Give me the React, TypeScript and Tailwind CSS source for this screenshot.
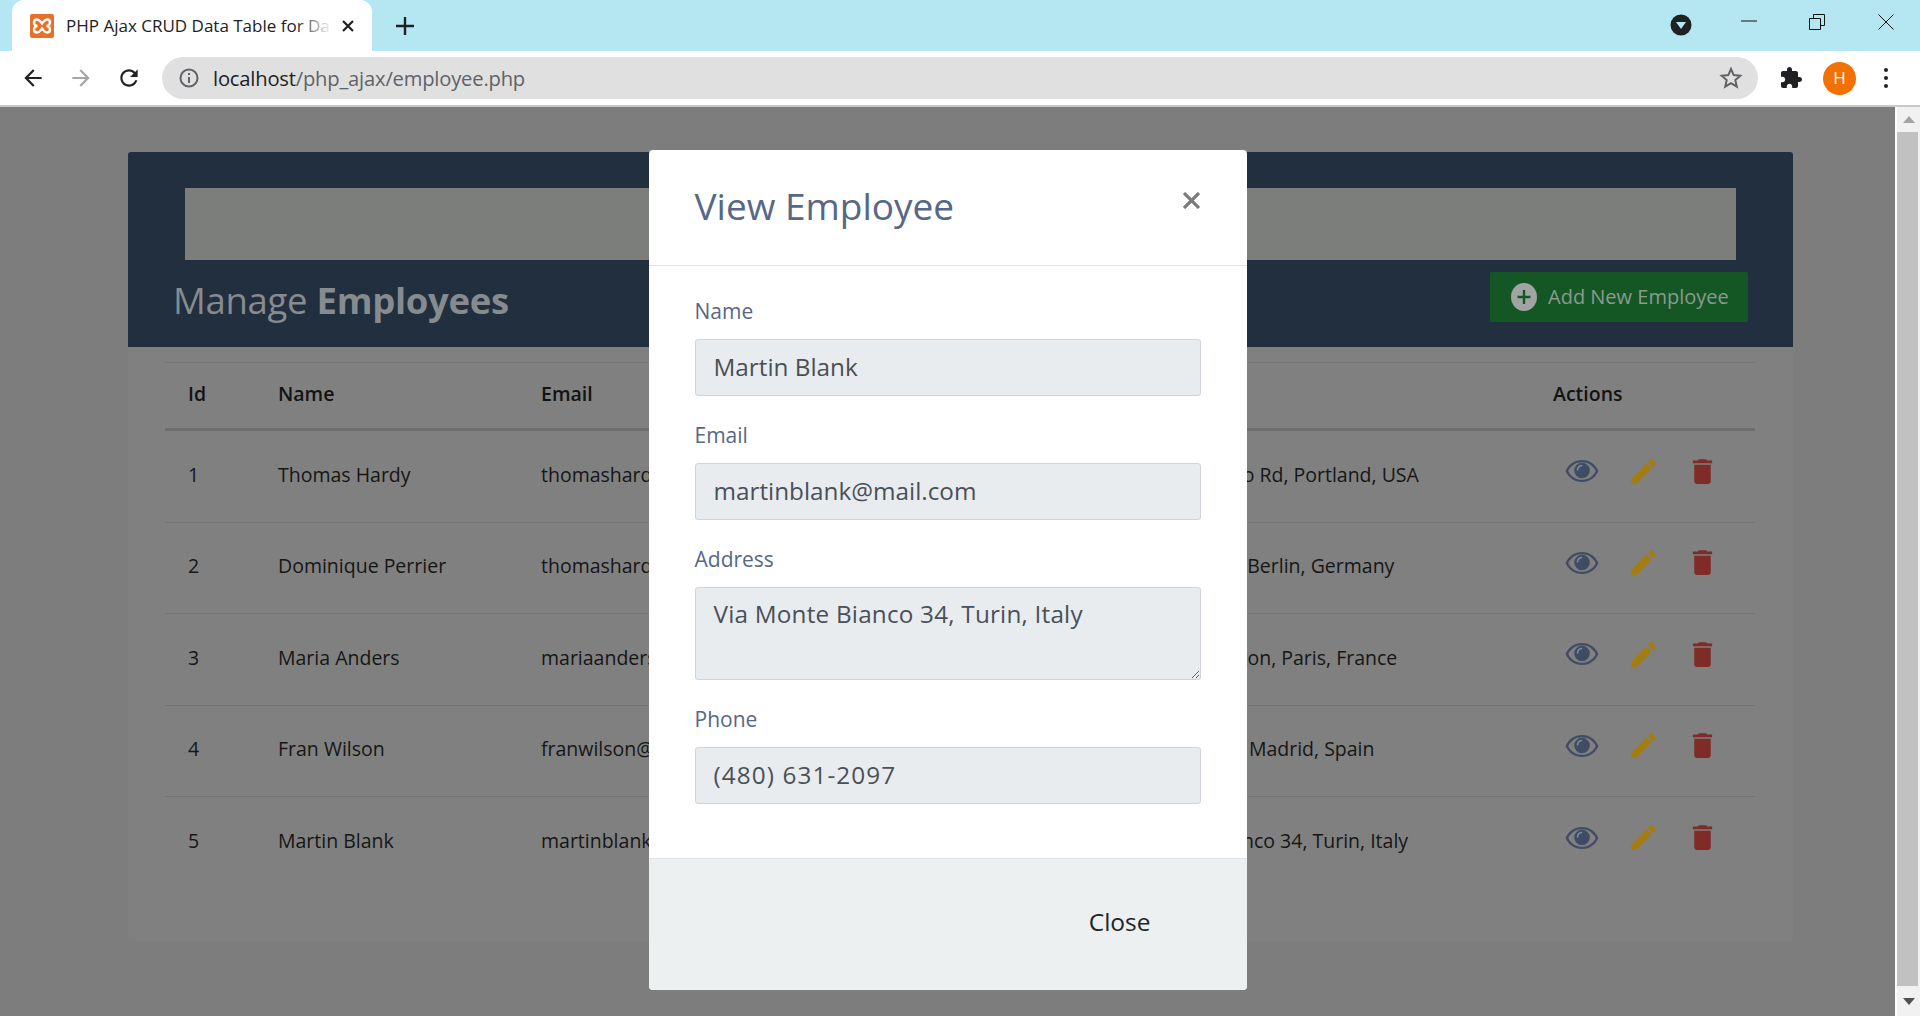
import React from "react";

const sans = "font-['Open_Sans','Liberation_Sans',sans-serif]";

const rows = [
  ["1", "Thomas Hardy", "thomashardy@mail.com", "89 Chiaroscuro Rd, Portland, USA"],
  ["2", "Dominique Perrier", "thomashardy@mail.com", "Obere Str. 57, Berlin, Germany"],
  ["3", "Maria Anders", "mariaanders@mail.com", "25, rue Lauriston, Paris, France"],
  ["4", "Fran Wilson", "franwilson@mail.com", "C/ Araquil, 67, Madrid, Spain"],
  ["5", "Martin Blank", "martinblank@mail.com", "Via Monte Bianco 34, Turin, Italy"],
];

function Eye() {
  return (
    <svg width="34" height="22" viewBox="0 0 34 22" className="text-[#3f4c64]">
      <path fill="currentColor" fillRule="evenodd" d="M17 0C9.6 0 3.4 4.4.5 11 3.4 17.6 9.600 22 17 22s13.600-4.400 16.500-11C30.600 4.400 24.400 0 17 0zm0 2.200c6 0 11.200 3.400 13.800 8.800C28.200 16.400 23 19.800 17 19.800S5.800 16.400 3.200 11C5.800 5.600 11 2.200 17 2.200z" />
      <circle cx="17" cy="10.500" r="7.800" fill="currentColor" />
      <path d="M12.500 10c.2-2.600 1.800-4.200 4-4.500" fill="none" stroke="#7f8794" strokeWidth="1.600" strokeLinecap="round" />
    </svg>
  );
}

function Pencil() {
  return (
    <svg width="33" height="33" viewBox="0 0 24 24" fill="#a37d12">
      <path d="M3 17.250V21h3.750L17.810 9.940l-3.750-3.750L3 17.250zM20.710 7.040c.39-.39.39-1.020 0-1.410l-2.340-2.340c-.39-.39-1.020-.39-1.410 0l-1.830 1.830 3.750 3.750 1.830-1.830z" />
    </svg>
  );
}

function Trash() {
  return (
    <svg width="33" height="33" viewBox="0 0 24 24" fill="#7f2b27">
      <path d="M6 19c0 1.100.9 2 2 2h8c1.100 0 2-.9 2-2V7H6v12zM19 4h-3.500l-1-1h-5l-1 1H5v2h14V4z" />
    </svg>
  );
}

function Field({ label, value, track }: { label: string; value: string; track?: boolean }) {
  return (
    <div className="mb-[24px]">
      <label className="block h-[30px] mb-[13px] text-[21px] leading-[30px] text-[#566787]">{label}</label>
      <input
        readOnly
        value={value}
        className={`block w-full h-[57px] px-[18px] pb-[2px] bg-[#e9ecef] border border-[#ced4da] rounded-[3px] text-[24.300px] text-[#495057] outline-none ${track ? "tracking-[1.100px]" : ""}`}
      />
    </div>
  );
}

export default function App() {
  return (
    <div className={`${sans} w-[1920px] h-[1016px] flex flex-col overflow-hidden bg-white`}>
      {/* Tab strip */}
      <div className="h-[51px] shrink-0 bg-[#b5e7f3] flex items-end pl-[12px]">
        <div className="relative w-[360px] h-[51px] bg-white rounded-t-[12px] flex items-center pl-[18px] pr-[14px]">
          <svg width="24" height="24" viewBox="0 0 24 24" className="shrink-0">
            <rect width="24" height="24" rx="2" fill="#e8702a" />
            <path d="M7 5.500c2.500 0 3.500 2 5 4 1.500-2 2.500-4 5-4 2 0 3 1.500 3 3s-1 3.500-3.500 3.500c2.500 0 3.500 2 3.500 3.500s-1 3-3 3c-2.500 0-3.500-2-5-4-1.500 2-2.500 4-5 4-2 0-3-1.500-3-3s1-3.500 3.500-3.500C5 12 4 10 4 8.500s1-3 3-3z" fill="none" stroke="#fff" strokeWidth="2.400" />
          </svg>
          <div className="relative ml-[12px] w-[266px] overflow-hidden whitespace-nowrap text-[17px] text-[#202124] leading-[24px]">
            PHP Ajax CRUD Data Table for Database
            <div className="absolute right-0 top-0 bottom-0 w-[36px] bg-gradient-to-r from-transparent to-white" />
          </div>
          <svg width="14" height="14" viewBox="0 0 14 14" className="ml-[9px] shrink-0" stroke="#202124" strokeWidth="2.200">
            <path d="M2 2l10 10M12 2L2 12" />
          </svg>
        </div>
        <svg width="18" height="18" viewBox="0 0 18 18" className="ml-[24px] mb-[16px]" stroke="#202124" strokeWidth="2.400">
          <path d="M9 0v18M0 9h18" />
        </svg>
        <div className="ml-auto h-full flex items-start">
          <svg width="22" height="22" viewBox="0 0 22 22" className="mt-[14px] mr-[49px]">
            <circle cx="11" cy="11" r="10.500" fill="#202124" />
            <path d="M6 8h10l-5 7z" fill="#b5e7f3" />
          </svg>
          <svg width="16" height="2" viewBox="0 0 16 2" className="mt-[20px] mr-[52px]"><path d="M0 1h16" stroke="#111" /></svg>
          <svg width="16" height="16" viewBox="0 0 16 16" className="mt-[14px] mr-[53px]" fill="none" stroke="#111">
            <path d="M.5 4.500h11v11H.5zM4.500 4.500V.5h11v11h-4" />
          </svg>
          <svg width="16" height="16" viewBox="0 0 16 16" className="mt-[14px] mr-[26px]" stroke="#111">
            <path d="M.5.5l15 15M15.500.5l-15 15" />
          </svg>
        </div>
      </div>

      {/* Toolbar */}
      <div className="h-[54px] shrink-0 bg-white flex items-center">
        <svg width="26" height="26" viewBox="0 0 24 24" className="ml-[20px]" fill="#202124">
          <path d="M20 11H7.830l5.590-5.590L12 4l-8 8 8 8 1.410-1.410L7.830 13H20v-2z" />
        </svg>
        <svg width="26" height="26" viewBox="0 0 24 24" className="ml-[22px]" fill="#a4a5a7">
          <path d="M4 11h12.170l-5.590-5.590L12 4l8 8-8 8-1.410-1.410L16.170 13H4v-2z" />
        </svg>
        <svg width="26" height="26" viewBox="0 0 24 24" className="ml-[22px]" fill="#202124">
          <path d="M17.650 6.350C16.200 4.900 14.210 4 12 4c-4.420 0-7.990 3.580-7.990 8s3.570 8 7.990 8c3.730 0 6.840-2.550 7.730-6h-2.080c-.82 2.330-3.040 4-5.650 4-3.310 0-6-2.690-6-6s2.690-6 6-6c1.660 0 3.140.69 4.220 1.780L13 11h7V4l-2.350 2.350z" />
        </svg>
        <div className="ml-[20px] w-[1596px] h-[42px] rounded-full bg-[#e0e0e0] flex items-center pl-[17px] pr-[15px]">
          <svg width="20" height="20" viewBox="0 0 20 20" fill="none" stroke="#5f6368" strokeWidth="2">
            <circle cx="10" cy="10" r="8.500" />
            <path d="M10 9v6M10 5v2" />
          </svg>
          <div className="ml-[14px] text-[20.200px] tracking-[-0.2px] text-[#5f6368] whitespace-nowrap">
            <span className="text-[#202124]">localhost</span>/php_ajax/employee.php
          </div>
          <svg width="24" height="24" viewBox="0 0 24 24" className="ml-auto" fill="none" stroke="#5f6368" strokeWidth="2">
            <path d="M12 3l2.700 6.100 6.600.6-5 4.400 1.500 6.500L12 17.200l-5.800 3.400 1.500-6.500-5-4.400 6.600-.6z" />
          </svg>
        </div>
        <svg width="24" height="24" viewBox="0 0 24 24" className="ml-[21px]" fill="#202124">
          <path d="M20.500 11H19V7c0-1.100-.9-2-2-2h-4V3.500C13 2.120 11.880 1 10.500 1S8 2.120 8 3.500V5H4c-1.100 0-1.990.9-1.990 2v3.800H3.500c1.490 0 2.700 1.210 2.700 2.700s-1.210 2.700-2.700 2.700H2V20c0 1.100.9 2 2 2h3.800v-1.500c0-1.490 1.210-2.700 2.700-2.700 1.490 0 2.700 1.210 2.700 2.700V22H17c1.100 0 2-.9 2-2v-4h1.500c1.380 0 2.500-1.120 2.500-2.500S21.880 11 20.500 11z" />
        </svg>
        <div className="ml-[20px] w-[33px] h-[33px] rounded-full bg-[#f27100] flex items-center justify-center text-white text-[17px]">H</div>
        <div className="ml-[28px] flex flex-col gap-[4px]">
          <span className="w-[4px] h-[4px] rounded-full bg-[#202124]" />
          <span className="w-[4px] h-[4px] rounded-full bg-[#202124]" />
          <span className="w-[4px] h-[4px] rounded-full bg-[#202124]" />
        </div>
      </div>
      <div className="h-[2px] shrink-0 bg-[#c8c8c8]" />

      {/* Viewport */}
      <div className="flex-1 flex min-h-0">
        <div className="relative flex-1 bg-[#7d7d7d] pt-[45px] pl-[128px] pr-[102px]">
          {/* Dimmed page */}
          <div className="h-[789px] bg-[#808080] rounded-[3px]">
            <div className="h-[195px] bg-[#222f3f] rounded-t-[3px] pl-[45px] pr-[45px] pt-[36px]">
              <div className="ml-[12px] mr-[12px] h-[72px] bg-[#7c7e7c]" />
              <div className="flex justify-between items-start pt-[12px]">
                <div className="pt-[5px] text-[36.500px] leading-[46px] tracking-[-0.3px] text-[#868b8f]">
                  Manage <b className="font-bold">Employees</b>
                </div>
                <div className="w-[258px] h-[50px] rounded-[2px] bg-[#155724] flex items-center pl-[21px] text-[20px] text-[#8a9a8e]">
                  <svg width="26" height="28" viewBox="0 0 26 28" className="mr-[11px]">
                    <ellipse cx="13" cy="14" rx="13" ry="14" fill="#a0a5a2" />
                    <path d="M13 7v14M6.500 14h13" stroke="#155724" strokeWidth="2.400" />
                  </svg>
                  Add New Employee
                </div>
              </div>
            </div>
            <div className="ml-[37px] mr-[38px] mt-[15px] border-t border-[#757575] text-[#131313]">
              <div className="grid grid-cols-[113px_263px_576px_436px_1fr] h-[68px] pb-[4px] items-center border-b-[3px] border-[#6f6f6f] text-[19.500px] font-semibold">
                <div className="pl-[23px]">Id</div>
                <div>Name</div>
                <div>Email</div>
                <div>Address</div>
                <div>Actions</div>
              </div>
              {rows.map((r) => (
                <div key={r[0]} className="grid grid-cols-[113px_263px_576px_436px_1fr] h-[91.500px] pb-[4px] items-center border-b border-[#747474] last:border-b-0 text-[19.500px] text-[#161616]">
                  <div className="pl-[23px]">{r[0]}</div>
                  <div>{r[1]}</div>
                  <div>{r[2]}</div>
                  <div className="whitespace-nowrap">{r[3]}</div>
                  <div className="flex items-center -mt-[6px] ml-[12px]">
                    <Eye />
                    <span className="ml-[28px]"><Pencil /></span>
                    <span className="ml-[26px]"><Trash /></span>
                  </div>
                </div>
              ))}
            </div>
          </div>

          {/* Modal */}
          <div className="absolute inset-0 flex justify-center items-start pt-[43px]">
            <div className="w-[598px] bg-white rounded-[4px] overflow-hidden">
              <div className="h-[116px] border-b border-[#e2e4e7] flex justify-between pl-[46px] pr-[47px]">
                <div className="pt-[30px] text-[37px] leading-[52px] text-[#566787]">View Employee</div>
                <svg width="17" height="17" viewBox="0 0 17 17" className="mt-[42px]" stroke="#7b7b7b" strokeWidth="3.200">
                  <path d="M1 1l15 15M16 1L1 16" />
                </svg>
              </div>
              <div className="px-[46px] pt-[30px] pb-[30px]">
                <Field label="Name" value="Martin Blank" />
                <Field label="Email" value="martinblank@mail.com" />
                <div className="mb-[24px]">
                  <label className="block h-[30px] mb-[13px] text-[21px] leading-[30px] text-[#566787]">Address</label>
                  <textarea
                    readOnly
                    value="Via Monte Bianco 34, Turin, Italy"
                    className="block w-full h-[93px] px-[18px] py-[8px] bg-[#e9ecef] border border-[#ced4da] rounded-[3px] text-[24.300px] tracking-[0.2px] leading-[36px] text-[#495057] outline-none"
                  />
                </div>
                <Field label="Phone" value="(480) 631-2097" track />
              </div>
              <div className="h-[132px] bg-[#ecf0f1] border-t border-[#dee4e8] flex justify-end items-center pr-[96px] pb-[4px] text-[24.500px] text-[#212529]">
                Close
              </div>
            </div>
          </div>
        </div>

        {/* Scrollbar */}
        <div className="w-[25px] shrink-0 bg-[#f1f1f1] border-l-2 border-white flex flex-col items-center">
          <div className="h-[25px] flex items-center justify-center">
            <svg width="12" height="7" viewBox="0 0 12 7"><path d="M6 0l6 7H0z" fill="#a3a3a3" /></svg>
          </div>
          <div className="w-[21px] -ml-[2px] mr-0 h-[854px] bg-[#c1c1c1]" />
          <div className="flex-1 flex items-center justify-center">
            <svg width="12" height="7" viewBox="0 0 12 7"><path d="M0 0h12L6 7z" fill="#505050" /></svg>
          </div>
        </div>
      </div>
    </div>
  );
}
